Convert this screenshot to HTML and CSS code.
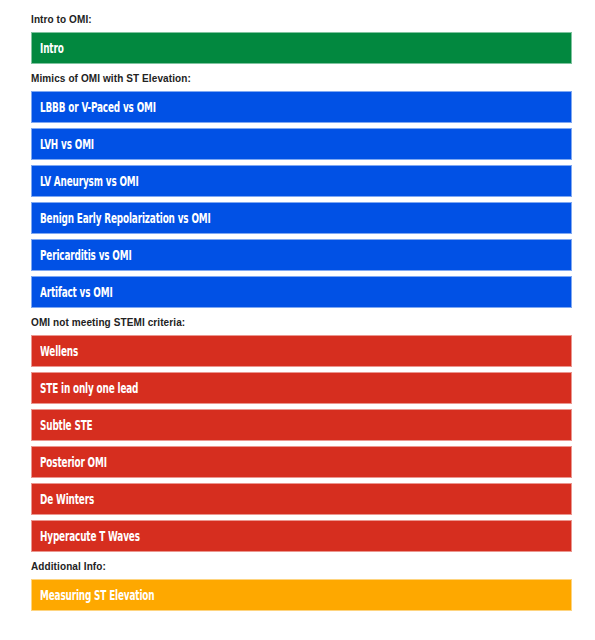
FILE: index.html
```html
<!DOCTYPE html>
<html lang="en">
<head>
<meta charset="utf-8">
<title>OMI</title>
<link rel="stylesheet" href="styles.css">
</head>
<body>
<main class="page">
  <section class="group">
    <h2 class="group-title">Intro to OMI:</h2>
    <a class="btn btn-green" href="#"><span class="btn-label">Intro</span></a>
  </section>
  <section class="group">
    <h2 class="group-title">Mimics of OMI with ST Elevation:</h2>
    <a class="btn btn-blue" href="#"><span class="btn-label">LBBB or V-Paced vs OMI</span></a>
    <a class="btn btn-blue" href="#"><span class="btn-label">LVH vs OMI</span></a>
    <a class="btn btn-blue" href="#"><span class="btn-label">LV Aneurysm vs OMI</span></a>
    <a class="btn btn-blue" href="#"><span class="btn-label">Benign Early Repolarization vs OMI</span></a>
    <a class="btn btn-blue" href="#"><span class="btn-label">Pericarditis vs OMI</span></a>
    <a class="btn btn-blue" href="#"><span class="btn-label">Artifact vs OMI</span></a>
  </section>
  <section class="group">
    <h2 class="group-title">OMI not meeting STEMI criteria:</h2>
    <a class="btn btn-red" href="#"><span class="btn-label">Wellens</span></a>
    <a class="btn btn-red" href="#"><span class="btn-label">STE in only one lead</span></a>
    <a class="btn btn-red" href="#"><span class="btn-label">Subtle STE</span></a>
    <a class="btn btn-red" href="#"><span class="btn-label">Posterior OMI</span></a>
    <a class="btn btn-red" href="#"><span class="btn-label">De Winters</span></a>
    <a class="btn btn-red" href="#"><span class="btn-label">Hyperacute T Waves</span></a>
  </section>
  <section class="group">
    <h2 class="group-title">Additional Info:</h2>
    <a class="btn btn-orange" href="#"><span class="btn-label">Measuring ST Elevation</span></a>
  </section>
</main>
</body>
</html>
```

FILE: styles.css
```css
html, body {
  margin: 0;
  padding: 0;
  background: #ffffff;
}

.page {
  width: 541px;
  margin-left: 31px;
  padding-top: 13px;
  display: flex;
  flex-direction: column;
  gap: 8px;
}

.group {
  display: flex;
  flex-direction: column;
  gap: 5px;
}

.group-title {
  margin: 0;
  font-family: "Liberation Sans", Arial, sans-serif;
  font-weight: 700;
  font-size: 10px;
  line-height: 14px;
  letter-spacing: 0.1px;
  color: #222222;
}

.btn {
  display: flex;
  align-items: center;
  box-sizing: border-box;
  height: 32px;
  padding: 0 8px;
  border: 1px solid;
  color: #ffffff;
  text-decoration: none;
}

.btn-label {
  display: inline-block;
  font-family: "DejaVu Sans Condensed", "DejaVu Sans", sans-serif;
  font-stretch: condensed;
  font-weight: 700;
  font-size: 13.5px;
  line-height: 16px;
  letter-spacing: -0.2px;
  white-space: nowrap;
  transform: scaleX(0.73);
  transform-origin: left center;
}

.btn-green {
  background: #02883f;
  border-color: #7fc39f;
}

.btn-blue {
  background: #0151e5;
  border-color: #7fa8f2;
}

.btn-red {
  background: #d62e1f;
  border-color: #eb968f;
}

.btn-orange {
  background: #fea800;
  border-color: #fed47f;
}
```
